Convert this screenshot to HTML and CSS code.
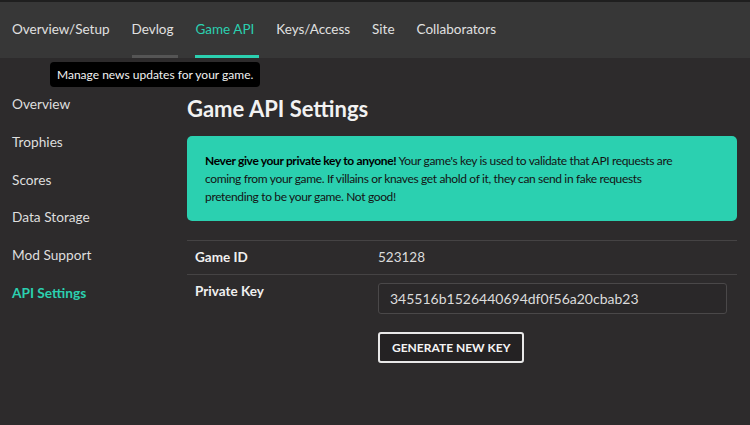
FILE: index.html
```html
<!DOCTYPE html>
<html lang="en">
<head>
<meta charset="utf-8">
<title>Game API Settings</title>
<link rel="stylesheet" href="styles.css">
</head>
<body>
<div class="topstrip"></div>
<nav class="tabs">
  <a class="tab">Overview/Setup</a>
  <a class="tab hover">Devlog</a>
  <a class="tab active">Game API</a>
  <a class="tab">Keys/Access</a>
  <a class="tab">Site</a>
  <a class="tab">Collaborators</a>
  <div class="tooltip">Manage news updates for your game.</div>
</nav>
<div class="page">
  <aside class="sidebar">
    <a class="side-item">Overview</a>
    <a class="side-item">Trophies</a>
    <a class="side-item">Scores</a>
    <a class="side-item">Data Storage</a>
    <a class="side-item">Mod Support</a>
    <a class="side-item active">API Settings</a>
  </aside>
  <main class="content">
    <h1 class="title">Game API Settings</h1>
    <div class="alert"><strong>Never give your private key to anyone!</strong> Your game's key is used to validate that API requests are coming from your game. If villains or knaves get ahold of it, they can send in fake requests pretending to be your game. Not good!</div>
    <div class="table">
      <div class="row">
        <div class="label">Game ID</div>
        <div class="value">523128</div>
      </div>
      <div class="row last">
        <div class="label">Private Key</div>
        <div class="value">
          <div class="keybox">345516b1526440694df0f56a20cbab23</div>
          <button class="btn">Generate New Key</button>
        </div>
      </div>
    </div>
  </main>
</div>
</body>
</html>
```
FILE: styles.css
```css
* { box-sizing: border-box; }
html, body { margin: 0; padding: 0; }
body {
  background: #2d2b2c;
  color: #dcdcdc;
  font-family: Lato, "Noto Sans", sans-serif;
  width: 750px;
  height: 425px;
  overflow: hidden;
}
.topstrip { height: 2px; background: #1f1f1f; }
.tabs {
  position: relative;
  display: flex;
  gap: 17px;
  height: 56px;
  padding: 0 12px;
  background: #373737;
  align-items: stretch;
}
.tab {
  display: flex;
  align-items: center;
  padding: 0 5px 0 0;
  font-size: 13.5px;
  color: #e0e0e0;
  border-bottom: 3px solid transparent;
}
.tab.hover { border-bottom-color: #555; }
.tab.active { color: #2bd0b0; border-bottom-color: #2bd0b0; }
.tooltip {
  position: absolute;
  left: 50px;
  top: 60px;
  z-index: 5;
  background: #000;
  color: #f2f2f2;
  font-size: 12px;
  line-height: 13px;
  padding: 6px 7px 6px;
  border-radius: 4px;
  white-space: nowrap;
}
.page { display: flex; }
.sidebar {
  width: 187px;
  padding: 37px 0 0 12px;
  display: flex;
  flex-direction: column;
  gap: 20.8px;
}
.side-item { font-size: 13.7px; color: #dedede; line-height: 17px; }
.side-item.active { color: #2bd0b0; font-weight: bold; }
.content { width: 550px; padding-top: 37px; }
.title {
  margin: 0 0 14px;
  font-size: 22px;
  font-weight: bold;
  color: #f2f2f2;
  line-height: 27px;
}
.alert {
  background: #2bd0b0;
  color: #141414;
  border-radius: 5px;
  padding: 16px 50px 15px 18px;
  font-size: 12px;
  letter-spacing: -0.35px;
  line-height: 18px;
}
.alert strong { color: #000; }
.table { margin-top: 19px; border-top: 1px solid #454344; }
.row { display: flex; border-bottom: 1px solid #454344; }
.row.last { border-bottom: none; }
.label {
  width: 183px;
  padding: 8px 8px;
  font-size: 13.5px;
  font-weight: bold;
  color: #f0f0f0;
  line-height: 17px;
}
.value {
  flex: 1;
  padding: 8px 10px 8px 8px;
  font-size: 13.5px;
  line-height: 17px;
  color: #dcdcdc;
}
.keybox {
  height: 31px;
  border: 1px solid #4a4849;
  background: #2a2829;
  border-radius: 3px;
  padding: 6px 11px;
  font-size: 14px;
  color: #dcdcdc;
  line-height: 17px;
}
.btn {
  display: block;
  margin-top: 18px;
  height: 31px;
  padding: 0 12px;
  background: #242223;
  border: 2px solid #e8e8e8;
  border-radius: 3px;
  color: #f4f4f4;
  font-family: Lato, "Noto Sans", sans-serif;
  font-weight: bold;
  font-size: 12px;
  text-transform: uppercase;
}
```
